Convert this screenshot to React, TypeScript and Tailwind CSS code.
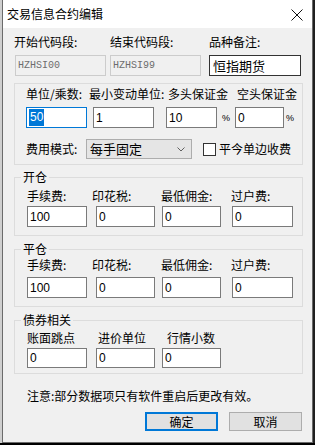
import type { ReactNode } from "react"

function Field({
  w,
  ml = 0,
  children,
  focus,
  h = "h-[21px]",
}: {
  w: string
  ml?: string | number
  children?: ReactNode
  focus?: boolean
  h?: string
}) {
  return (
    <div
      className={`${w} ${h} flex shrink-0 items-center border bg-white pl-[2px] font-['Liberation_Sans',sans-serif] text-[12px] ${
        focus ? "border-[#0078d7]" : "border-[#7a7a7a]"
      }`}
      style={{ marginLeft: ml }}
    >
      {children}
    </div>
  )
}

function Disabled({ w, ml, text }: { w: string; ml: number; text: string }) {
  return (
    <div
      className={`${w} flex h-[21px] shrink-0 items-center border border-[#cccccc] bg-[#f0f0f0] pl-[2px] font-['Liberation_Mono',monospace] text-[10px] text-[#6d6d6d]`}
      style={{ marginLeft: ml }}
    >
      {text}
    </div>
  )
}

function Legend({ children }: { children: ReactNode }) {
  return (
    <legend className="ml-[6px] px-[2px] text-[12px] leading-[14px]">
      {children}
    </legend>
  )
}

function FeeGroup({
  title,
  mt,
  pt,
  gap,
}: {
  title: string
  mt: string
  pt: string
  gap: string
}) {
  return (
    <fieldset className={`${mt} border border-[#dcdcdc] pb-[8px]`}>
      <Legend>{title}</Legend>
      <div className={`${pt} flex pl-[12px]`}>
        <span className="w-[65px]">手续费:</span>
        <span className="w-[69px]">印花税:</span>
        <span className="w-[70px]">最低佣金:</span>
        <span>过户费:</span>
      </div>
      <div className={`${gap} flex`}>
        <Field w="w-[60px]" ml={12}>100</Field>
        <Field w="w-[59px]" ml={9}>0</Field>
        <Field w="w-[59px]" ml={7}>0</Field>
        <Field w="w-[61px]" ml={11}>0</Field>
      </div>
    </fieldset>
  )
}

export default function App() {
  return (
    <div className="flex h-[445px] w-[315px] flex-col bg-black font-['Noto_Sans_CJK_SC','Liberation_Sans',sans-serif] text-[12px] leading-[16px] text-black">
      <div className="flex h-[443px]">
        <div className="w-[2px] bg-[#cfcfcf]" />
        <div className="flex w-[311px] flex-col border-x border-b border-[#6b6b6b] bg-[#f0f0f0]">
          {/* title bar */}
          <div className="flex h-[28px] items-center justify-between bg-white pl-[4px] pr-[9px]">
            <span>交易信息合约编辑</span>
            <svg width="12" height="12" viewBox="0 0 12 12" className="mt-[1px]">
              <path d="M0.5 0.5 L11.5 11.5 M11.5 0.5 L0.5 11.5" stroke="#111" strokeWidth="1" />
            </svg>
          </div>

          <div className="flex flex-col pl-[11px] pr-[9px]">
            <div className="mt-[6px] flex">
              <span className="w-[96px]">开始代码段:</span>
              <span className="w-[99px]">结束代码段:</span>
              <span>品种备注:</span>
            </div>
            <div className="mt-[5px] flex">
              <Disabled w="w-[91px]" ml={1} text="HZHSI00" />
              <Disabled w="w-[91px]" ml={4} text="HZHSI99" />
              <div className="ml-[8px] flex h-[21px] w-[92px] items-center border border-[#333] bg-white pl-[3px] text-[13px]">
                恒指期货
              </div>
            </div>

            {/* contract settings */}
            <fieldset className="mt-[7px] border border-[#dcdcdc] pb-[5px] pt-[2px]">
              <div className="flex pl-[11px]">
                <span className="w-[63px]">单位/乘数:</span>
                <span className="w-[79px]">最小变动单位:</span>
                <span className="w-[69px]">多头保证金</span>
                <span>空头保证金</span>
              </div>
              <div className="mt-[5px] flex items-center">
                <Field w="w-[61px]" ml={11} focus>
                  <span className="bg-[#0078d7] px-[1px] leading-[17px] text-white">50</span>
                </Field>
                <Field w="w-[61px]" ml={6}>1</Field>
                <Field w="w-[51px]" ml={12}>10</Field>
                <span className="ml-[5px] w-[8px] font-['Liberation_Sans',sans-serif] text-[9px]">%</span>
                <Field w="w-[49px]" ml={5}>0</Field>
                <span className="ml-[2px] font-['Liberation_Sans',sans-serif] text-[9px]">%</span>
              </div>
              <div className="mt-[11px] flex items-center pl-[11px]">
                <span className="w-[60px]">费用模式:</span>
                <div className="flex h-[20px] w-[106px] items-center justify-between border border-[#adadad] bg-[#e5e5e5] pl-[3px] pr-[6px] text-[13px]">
                  <span>每手固定</span>
                  <svg width="8" height="5" viewBox="0 0 8 5">
                    <path d="M0.5 0.5 L4 4 L7.5 0.5" fill="none" stroke="#606060" strokeWidth="1" />
                  </svg>
                </div>
                <div className="ml-[11px] h-[13px] w-[13px] border border-[#333] bg-white" />
                <span className="ml-[3px]">平今单边收费</span>
              </div>
            </fieldset>

            <FeeGroup title="开仓" mt="mt-[5px]" pt="pt-[4px]" gap="mt-[2px]" />
            <FeeGroup title="平仓" mt="mt-[6px]" pt="pt-[1px]" gap="mt-[4px]" />

            <fieldset className="mt-[6px] border border-[#dcdcdc] pb-[5px]">
              <Legend>债券相关</Legend>
              <div className="flex pt-[3px] pl-[12px]">
                <span className="w-[71px]">账面跳点</span>
                <span className="w-[69px]">进价单位</span>
                <span>行情小数</span>
              </div>
              <div className="mt-[2px] flex">
                <Field w="w-[60px]" ml={12} h="h-[20px]">0</Field>
                <Field w="w-[59px]" ml={9} h="h-[20px]">0</Field>
                <Field w="w-[59px]" ml={7} h="h-[20px]">0</Field>
              </div>
            </fieldset>

            <p className="ml-[13px] mt-[14px]">注意:部分数据项只有软件重启后更改有效。</p>

            <div className="mt-[8px] flex justify-end gap-[11px] pr-[1px]">
              <button className="flex h-[19px] w-[73px] items-center justify-center border-2 border-[#0078d7] bg-[#e1e1e1]">
                确定
              </button>
              <button className="flex h-[19px] w-[73px] items-center justify-center border border-[#adadad] bg-[#e1e1e1]">
                取消
              </button>
            </div>
          </div>
        </div>
        <div className="flex-1 bg-[#202020]" />
      </div>
    </div>
  )
}
